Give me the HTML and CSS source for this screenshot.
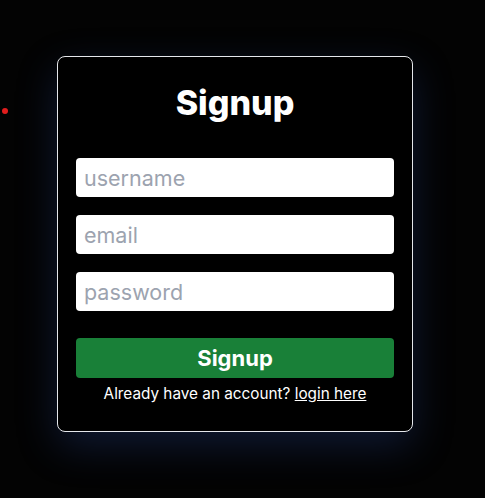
FILE: index.html
```html
<!DOCTYPE html>
<html>
<head>
<meta charset="utf-8">
<link rel="stylesheet" href="styles.css">
</head>
<body>
<span class="dot"></span>
<main class="page">
  <form class="card">
    <h1 class="title">Signup</h1>
    <input class="field" type="text" placeholder="username">
    <input class="field" type="email" placeholder="email">
    <input class="field" type="password" placeholder="password">
    <button class="btn" type="button">Signup</button>
    <p class="foot">Already have an account? <a href="#">login here</a></p>
  </form>
</main>
</body>
</html>
```
FILE: styles.css
```css
html, body {
  margin: 0;
  background: #030303;
  height: 100%;
}
body {
  font-family: Inter, "Noto Sans", sans-serif;
  color: #fff;
  position: relative;
}
.dot {
  position: absolute;
  left: 2px;
  top: 108px;
  width: 6px;
  height: 6px;
  border-radius: 50%;
  background: #e11d1d;
}
.page {
  padding: 56px 0 0 57px;
}
.card {
  width: 318px;
  box-sizing: content-box;
  padding: 0 18px 27px;
  border: 1px solid #e5e7eb;
  border-radius: 8px;
  background: #000;
  box-shadow: 0 14px 40px rgba(40, 70, 150, 0.32);
  display: flex;
  flex-direction: column;
}
.title {
  margin: 26px 0 0;
  text-align: center;
  font-size: 34px;
  font-weight: 800;
  line-height: 40px;
}
.field {
  margin-top: 18px;
  height: 39px;
  border: none;
  border-radius: 4px;
  background: #fff;
  padding: 0 8px;
  font-family: inherit;
  font-size: 21.5px;
  outline: none;
}
.field:first-of-type {
  margin-top: 35px;
}
.field::placeholder {
  color: #9ca3af;
}
.btn {
  margin-top: 27px;
  height: 40px;
  border: none;
  border-radius: 4px;
  background: #198038;
  color: #fff;
  font-family: inherit;
  font-size: 22px;
  font-weight: 700;
}
.foot {
  margin: 6px 0 0;
  text-align: center;
  font-size: 15.3px;
  line-height: 20px;
}
.foot a {
  color: #fff;
}
```
